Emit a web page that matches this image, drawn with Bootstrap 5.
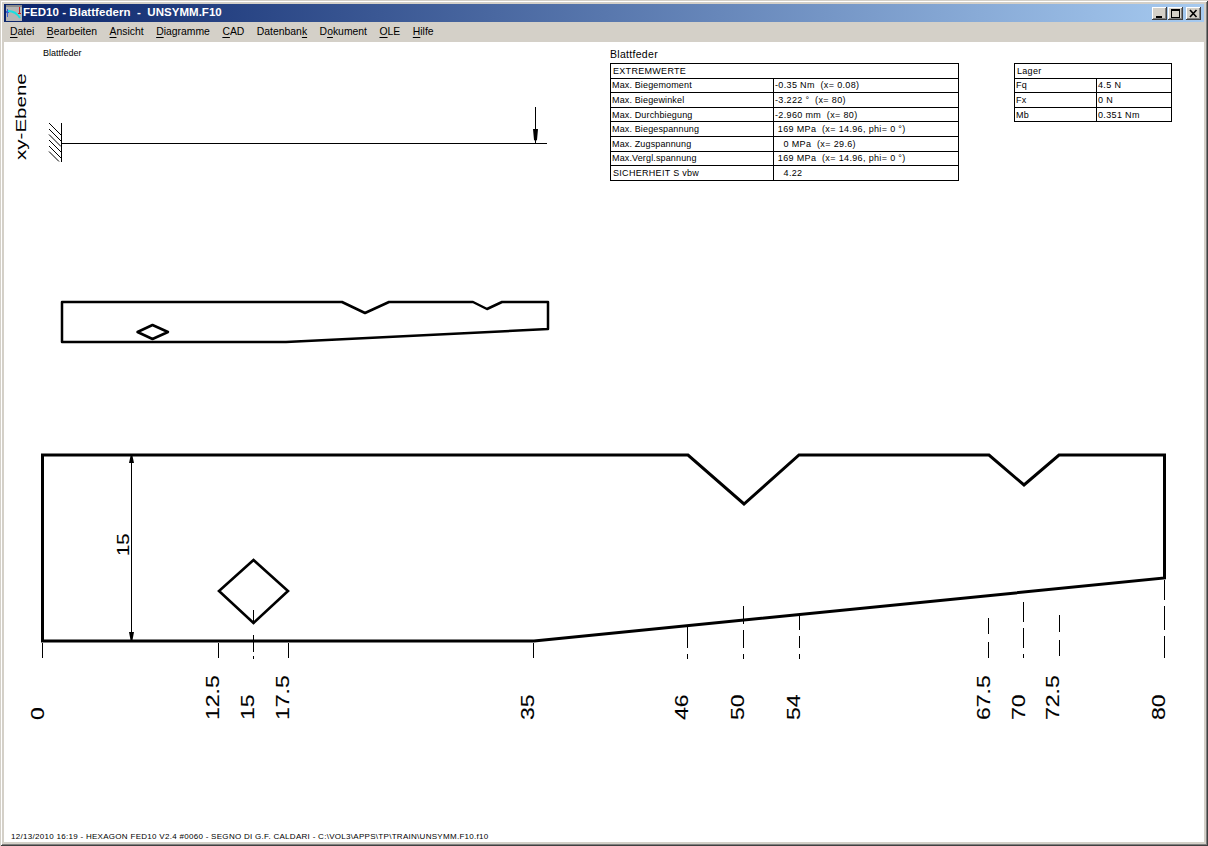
<!DOCTYPE html>
<html lang="de">

<head>
    <meta charset="UTF-8">
    <meta name="viewport" content="width=device-width, initial-scale=1.0">
    <title>FED10 - Blattfedern - UNSYMM.F10</title>
    <link href="https://cdn.jsdelivr.net/npm/bootstrap@5.3.0/dist/css/bootstrap.min.css" rel="stylesheet">
    <style>
        html, body { height: 100%; overflow: hidden; }
        body { font-family: "Liberation Sans", Arial, sans-serif; color: #000; background: #d4d0c8; }

        /* Fensterrahmen */
        .win-frame {
            height: 846px; padding: 4px; background: #d4d0c8;
            box-shadow: inset 1px 1px 0 #d4d0c8, inset -1px -1px 0 #404040, inset 2px 2px 0 #fff, inset -2px -2px 0 #808080;
        }
        .title-bar {
            height: 18px; flex: none; color: #fff; padding: 0 3px 0 2px;
            background: linear-gradient(to right, #0a246a, #a6caf0);
            font-weight: 700; font-size: 11.5px; white-space: pre;
        }
        .title-bar span { letter-spacing: .04px; }
        .app-icon { margin-right: 1px; }
        .win-btns { gap: 1px; padding-top: 1px; }
        .win-btn {
            display: block; width: 15px; height: 13px; background: #d4d0c8;
            box-shadow: inset -1px -1px 0 #404040, inset 1px 1px 0 #fff, inset -2px -2px 0 #808080;
        }
        .win-btn-close { margin-left: 2px; }

        /* Menue */
        .menu-bar { height: 20px; flex: none; background: #d4d0c8; }
        .menu-bar.navbar-expand .navbar-nav .nav-link {
            color: #000; font-size: 10.4px; line-height: 20px; padding: 0 6.25px;
        }
        .menu-bar.navbar-expand .navbar-nav .nav-item:first-child .nav-link { padding-left: 6px; }
        .menu-bar u { text-underline-offset: 2px; }

        /* Zeichenblatt */
        .sheet { background: #fff; min-height: 0; }
        .sheet-svg { position: absolute; top: 0; left: 0; width: 1200px; height: 800px; }
        .sheet-svg text { font-family: "Liberation Sans", Arial, sans-serif; fill: #000; }
        .dim-text text { stroke: #000; stroke-width: .12px; }
        .sheet-top { position: relative; padding: 5px 0 0 606px; gap: 55px; }
        .block-title { font-size: 10.5px; line-height: 14px; height: 14px; margin-bottom: 2px; letter-spacing: .3px; }
        .block-lager { padding-top: 16px; }
        .fed-table.table { width: auto; margin: 0; border-color: #000; table-layout: fixed; font-size: 9px; line-height: 11px; }
        .fed-table.table > tbody > tr > td {
            height: 14.6px; padding: 1px 1px 0 1px; border: 1px solid #000; color: #000; white-space: pre; letter-spacing: .14px; vertical-align: middle;
        }
        .fed-table.table > tbody > tr > td + td { letter-spacing: .35px; }
        .fed-table.table > tbody > tr > td.cell-head { padding-left: 2px; letter-spacing: .3px; }
        .w-ext-a { width: 163px; }
        .w-ext-b { width: 185px; }
        .w-lag-a { width: 82px; }
        .w-lag-b { width: 75px; }
        .sheet-foot { position: relative; font-size: 8px; line-height: 10px; padding-left: 7px; letter-spacing: .29px; white-space: pre; }
    </style>
</head>

<body class="m-0">

    <div class="win-frame d-flex flex-column">

        <!-- Titelleiste -->
        <div class="title-bar d-flex align-items-center">
            <svg class="app-icon flex-shrink-0" width="16" height="16" viewBox="0 0 16 16">
                <rect width="16" height="16" fill="#b4b4b4"/>
                <rect x="0" y="0" width="16" height="2" fill="#8a8a8a"/>
                <rect x="1" y="4" width="1" height="8" fill="#3a5fd0"/>
                <rect x="0" y="6" width="3" height="2" fill="#3a5fd0"/>
                <path d="M2 6 C7 6 11 8 14 13" fill="none" stroke="#18e0e0" stroke-width="2"/>
                <rect x="13" y="2" width="1" height="7" fill="#d02020"/>
                <rect x="12" y="8" width="3" height="1" fill="#d02020"/>
            </svg>
            <span>FED10 - Blattfedern  -  UNSYMM.F10</span>
            <div class="win-btns ms-auto d-flex">
                <svg class="win-btn" width="15" height="13" viewBox="0 0 15 13"><rect x="4" y="9" width="6" height="2" fill="#000"/></svg>
                <svg class="win-btn" width="15" height="13" viewBox="0 0 15 13"><path d="M3 2h9v9H3z M4 4v6h7V4z" fill="#000" fill-rule="evenodd"/></svg>
                <svg class="win-btn win-btn-close" width="15" height="13" viewBox="0 0 15 13"><path d="M4 3l6.500 7M10.500 3l-6.500 7" stroke="#000" stroke-width="1.600" fill="none"/></svg>
            </div>
        </div>

        <!-- Menue -->
        <nav class="menu-bar navbar navbar-expand p-0">
            <ul class="navbar-nav">
                <li class="nav-item"><a class="nav-link" href="#"><u>D</u>atei</a></li>
                <li class="nav-item"><a class="nav-link" href="#"><u>B</u>earbeiten</a></li>
                <li class="nav-item"><a class="nav-link" href="#"><u>A</u>nsicht</a></li>
                <li class="nav-item"><a class="nav-link" href="#"><u>D</u>iagramme</a></li>
                <li class="nav-item"><a class="nav-link" href="#"><u>C</u>AD</a></li>
                <li class="nav-item"><a class="nav-link" href="#">Datenban<u>k</u></a></li>
                <li class="nav-item"><a class="nav-link" href="#">D<u>o</u>kument</a></li>
                <li class="nav-item"><a class="nav-link" href="#"><u>O</u>LE</a></li>
                <li class="nav-item"><a class="nav-link" href="#"><u>H</u>ilfe</a></li>
            </ul>
        </nav>

        <!-- Zeichenblatt: SVG in Bildschirmkoordinaten -->
        <div class="sheet flex-grow-1 position-relative d-flex flex-column justify-content-between">

            <svg class="sheet-svg" viewBox="4 42 1200 800">
                <text font-size="9" x="43" y="56">Blattfeder</text>
                <text font-size="15" transform="translate(26 160) rotate(-90) scale(1.37 1)">xy-Ebene</text>

                <!-- Biegelinie -->
                <g stroke="#000" stroke-width="1" fill="none">
                    <path d="M61.500 123V162M62 143.500H547"/>
                    <path d="M49 123L61 135M49 129L61 141M49 134.500L61 146.500M49 140L61 152M49 146L61 158M49 151.500L59 161.500"/>
                    <path d="M535.500 107V143"/>
                </g>
                <path d="M533 129H538L537 140H536.500L535.500 143L534.500 140H534Z" fill="#000"/>

                <!-- Querschnitt klein -->
                <g stroke="#000" stroke-width="2.500" fill="none" stroke-linejoin="round">
                    <path d="M62 302H342L365 313L389 302H473L487 309L502 302H548V329L286 342H62Z"/>
                    <path d="M137.500 332L152.500 325L168 332L152.500 339Z"/>
                </g>

                <!-- Querschnitt gross -->
                <g stroke="#000" fill="none">
                    <path stroke-width="3" d="M42.500 455H688L744 504L799 455H989L1024 485L1059 455H1164.500V578L534 641H42.500Z"/>
                    <path stroke-width="2.600" d="M253.500 560L288 591L253.500 623L219 591Z"/>
                </g>

                <!-- Masslinien -->
                <g stroke="#000" stroke-width="1" fill="none">
                    <path d="M131.500 457V639"/>
                    <path d="M42.500 643V658M218.500 643V658M288.500 643V658M533.500 643V658"/>
                    <path d="M253.500 610V623M253.500 635V652M253.500 656V659"/>
                    <path d="M687.500 626V648M687.500 654V659"/>
                    <path d="M743.500 606V624M743.500 630V648M743.500 654V659"/>
                    <path d="M799.500 613V630M799.500 636V648M799.500 654V659"/>
                    <path d="M988.500 618V634M988.500 642V658"/>
                    <path d="M1023.500 602V622M1023.500 628V648M1023.500 654V658"/>
                    <path d="M1059.500 615V632M1059.500 640V656"/>
                    <path d="M1164.500 580V600M1164.500 606V630M1164.500 636V658"/>
                </g>
                <path d="M129 463H134L132.500 456H130.500ZM129 632H134L132.500 640H130.500Z" fill="#000"/>

                <g class="dim-text" font-size="18">
                    <text transform="translate(129 556) rotate(-90) scale(1.2 1)" font-size="17">15</text>
                    <text transform="translate(44 720) rotate(-90) scale(1.28 1)">0</text>
                    <text transform="translate(219 720) rotate(-90) scale(1.28 1)">12.5</text>
                    <text transform="translate(254 720) rotate(-90) scale(1.28 1)">15</text>
                    <text transform="translate(289 720) rotate(-90) scale(1.28 1)">17.5</text>
                    <text transform="translate(534 720) rotate(-90) scale(1.28 1)">35</text>
                    <text transform="translate(688 720) rotate(-90) scale(1.28 1)">46</text>
                    <text transform="translate(744 720) rotate(-90) scale(1.28 1)">50</text>
                    <text transform="translate(800 720) rotate(-90) scale(1.28 1)">54</text>
                    <text transform="translate(990 720) rotate(-90) scale(1.28 1)">67.5</text>
                    <text transform="translate(1025 720) rotate(-90) scale(1.28 1)">70</text>
                    <text transform="translate(1059 720) rotate(-90) scale(1.28 1)">72.5</text>
                    <text transform="translate(1165 720) rotate(-90) scale(1.28 1)">80</text>
                </g>
            </svg>

            <div class="sheet-top d-flex align-items-start">
                <div>
                    <div class="block-title">Blattfeder</div>
                    <table class="table fed-table">
                        <colgroup><col class="w-ext-a"><col class="w-ext-b"></colgroup>
                        <tbody>
                            <tr><td class="cell-head" colspan="2">EXTREMWERTE</td></tr>
                            <tr><td>Max. Biegemoment</td><td>-0.35 Nm  (x= 0.08)</td></tr>
                            <tr><td>Max. Biegewinkel</td><td>-3.222 °  (x= 80)</td></tr>
                            <tr><td>Max. Durchbiegung</td><td>-2.960 mm  (x= 80)</td></tr>
                            <tr><td>Max. Biegespannung</td><td> 169 MPa  (x= 14.96, phi= 0 °)</td></tr>
                            <tr><td>Max. Zugspannung</td><td>   0 MPa  (x= 29.6)</td></tr>
                            <tr><td>Max.Vergl.spannung</td><td> 169 MPa  (x= 14.96, phi= 0 °)</td></tr>
                            <tr><td class="cell-head">SICHERHEIT S vbw</td><td>   4.22</td></tr>
                        </tbody>
                    </table>
                </div>
                <div class="block-lager">
                    <table class="table fed-table">
                        <colgroup><col class="w-lag-a"><col class="w-lag-b"></colgroup>
                        <tbody>
                            <tr><td class="cell-head" colspan="2">Lager</td></tr>
                            <tr><td>Fq</td><td>4.5 N</td></tr>
                            <tr><td>Fx</td><td>0 N</td></tr>
                            <tr><td>Mb</td><td>0.351 Nm</td></tr>
                        </tbody>
                    </table>
                </div>
            </div>

            <div class="sheet-foot">12/13/2010 16:19 - HEXAGON FED10 V2.4 #0060 - SEGNO DI G.F. CALDARI - C:\VOL3\APPS\TP\TRAIN\UNSYMM.F10.f10</div>
        </div>
    </div>

    <script src="https://cdn.jsdelivr.net/npm/bootstrap@5.3.0/dist/js/bootstrap.bundle.min.js"></script>
</body>

</html>
